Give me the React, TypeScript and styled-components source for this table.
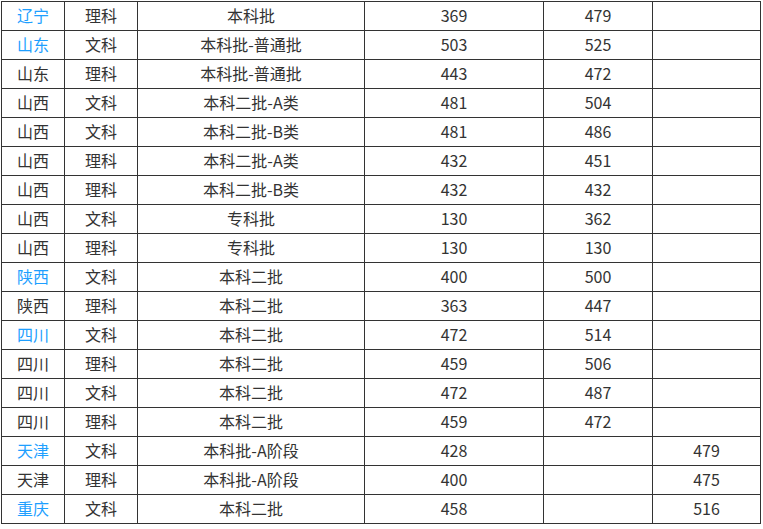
import React from "react";
import styled, { createGlobalStyle } from "styled-components";

const Global = createGlobalStyle`
  html, body { margin: 0; padding: 0; background: #fff; }
  body { padding: 1px 0 0 1px; font-family: "Noto Sans CJK SC", "Noto Sans", sans-serif; }
`;

const Grid = styled.div`
  display: grid;
  grid-template-columns: 62px 72px 226px 178px 108px 107px;
  grid-auto-rows: 28px;
  gap: 1px;
  width: 758px;
  background: #333;
  border: 1px solid #333;
`;

const Cell = styled.div<{ $link?: boolean }>`
  background: #fff;
  display: flex;
  align-items: center;
  justify-content: center;
  padding-bottom: 2px;
  box-sizing: border-box;
  font-size: 16px;
  line-height: 1;
  color: ${(p) => (p.$link ? "#1e9fff" : "#333")};
`;

type Row = [string, boolean, string, string, string, string, string];

const rows: Row[] = [
  ["辽宁", true, "理科", "本科批", "369", "479", ""],
  ["山东", true, "文科", "本科批-普通批", "503", "525", ""],
  ["山东", false, "理科", "本科批-普通批", "443", "472", ""],
  ["山西", false, "文科", "本科二批-A类", "481", "504", ""],
  ["山西", false, "文科", "本科二批-B类", "481", "486", ""],
  ["山西", false, "理科", "本科二批-A类", "432", "451", ""],
  ["山西", false, "理科", "本科二批-B类", "432", "432", ""],
  ["山西", false, "文科", "专科批", "130", "362", ""],
  ["山西", false, "理科", "专科批", "130", "130", ""],
  ["陕西", true, "文科", "本科二批", "400", "500", ""],
  ["陕西", false, "理科", "本科二批", "363", "447", ""],
  ["四川", true, "文科", "本科二批", "472", "514", ""],
  ["四川", false, "理科", "本科二批", "459", "506", ""],
  ["四川", false, "文科", "本科二批", "472", "487", ""],
  ["四川", false, "理科", "本科二批", "459", "472", ""],
  ["天津", true, "文科", "本科批-A阶段", "428", "", "479"],
  ["天津", false, "理科", "本科批-A阶段", "400", "", "475"],
  ["重庆", true, "文科", "本科二批", "458", "", "516"],
];

export default function App() {
  return (
    <>
      <Global />
      <Grid>
        {rows.map((r, i) => (
          <React.Fragment key={i}>
            <Cell $link={r[1]}>{r[0]}</Cell>
            <Cell>{r[2]}</Cell>
            <Cell>{r[3]}</Cell>
            <Cell>{r[4]}</Cell>
            <Cell>{r[5]}</Cell>
            <Cell>{r[6]}</Cell>
          </React.Fragment>
        ))}
      </Grid>
    </>
  );
}
